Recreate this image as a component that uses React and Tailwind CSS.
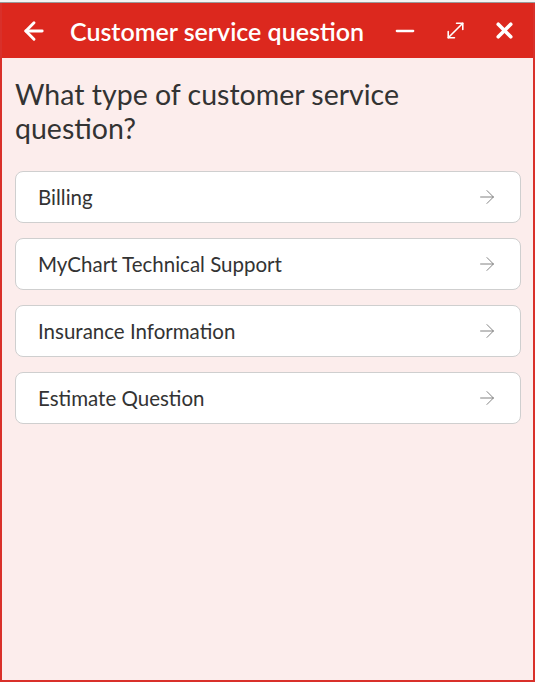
import { ArrowLeft, Minus, MoveDiagonal, X, ArrowRight } from "lucide-react";

const Questions = [
    { id: 1, label: "Billing" },
    { id: 2, label: "MyChart Technical Support" },
    { id: 3, label: "Insurance Information" },
    { id: 4, label: "Estimate Question" },
];

export default function App() {
    return (
        <div className="h-[682px] w-[535px] flex flex-col bg-[#e9e9e9] overflow-hidden" style={{ fontFamily: "Lato, 'Liberation Sans', sans-serif" }}>
            {/* page behind the popup */}
            <div className="h-[3px] bg-[#f4f4f4] border-b border-[#9a9a9a]"></div>

            <div className="flex-1 flex flex-col border-x-2 border-b-2 border-[#d9302a] bg-[#fcedec]">
                <header className="h-[55px] bg-[#dc281e] flex items-center text-white pl-[18px] pr-[16px]">
                    <ArrowLeft size={28} strokeWidth={2.5} />
                    <h1 className="ml-[22px] text-[25px] font-semibold pt-[2px]">Customer service question</h1>
                    <div className="ml-auto flex items-center gap-[24px]">
                        <Minus size={28} strokeWidth={2} />
                        <MoveDiagonal size={25} strokeWidth={1.5} />
                        <X size={25} strokeWidth={3.5} />
                    </div>
                </header>

                <section className="pl-[13px] pr-[12px] pt-[19px]">
                    <h2 className="text-[28.5px] leading-[34px] text-[#333] pr-6">What type of customer service question?</h2>
                    <div className="mt-[26px] flex flex-col gap-[15px]">
                        {Questions.map(q => (
                            <button key={q.id} className="h-[52px] bg-white border border-[#cfcfcf] rounded-[8px] flex items-center justify-between pl-[22px] pr-[22px] text-left">
                                <span className="text-[20.5px] text-[#333]">{q.label}</span>
                                <ArrowRight size={22} strokeWidth={1} className="text-[#777]" />
                            </button>
                        ))}
                    </div>
                </section>
            </div>
        </div>
    );
}
